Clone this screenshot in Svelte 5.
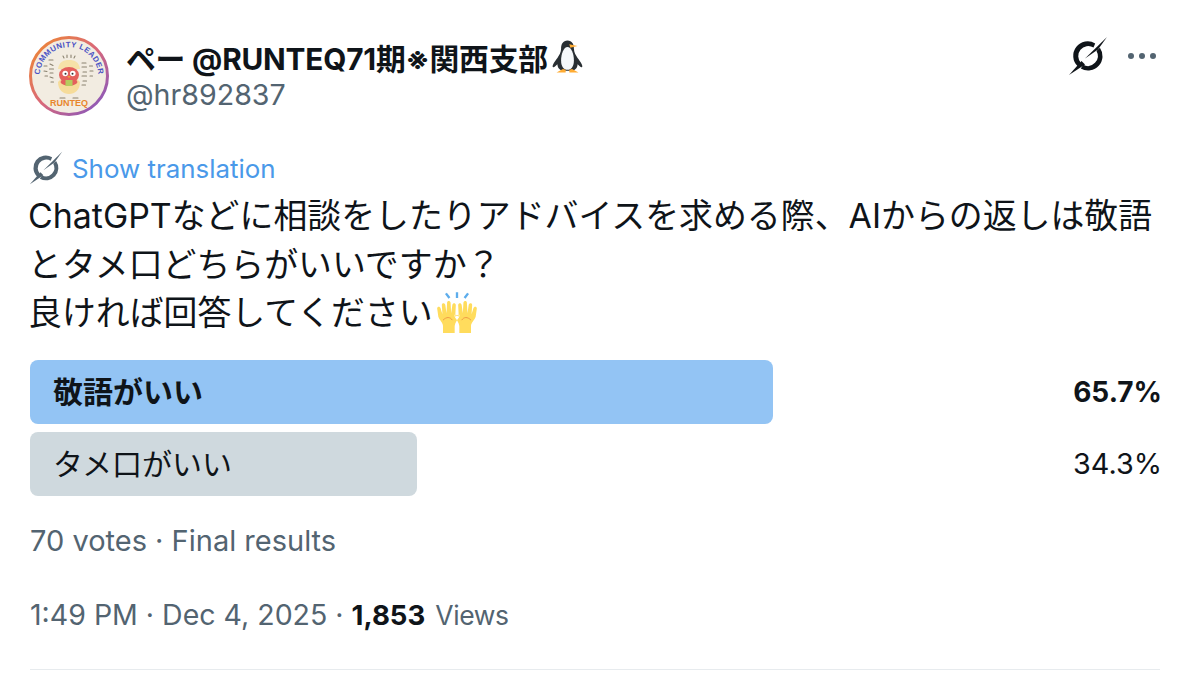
<script>
  const options = [
    { label: '敬語がいい', pct: 65.7, width: 743, winner: true },
    { label: 'タメ口がいい', pct: 34.3, width: 387, winner: false }
  ];
</script>

{#snippet grokIcon(cls)}
  <svg class={cls} viewBox="0 0 40 40" aria-hidden="true">
    <path d="M27.2 7.400A14.500 14.500 0 0 0 9.700 30.300L13 27A10 10 0 0 1 25.500 11.600Z" />
    <path d="M31.900 11.700A14.500 14.500 0 0 1 12.800 32.600L15.200 28.800A10 10 0 0 0 28.500 15Z" />
    <path d="M39 1L17 22.500L30 13.500Z" />
    <path d="M1 39L13.500 25L17 28.500Z" />
  </svg>
{/snippet}

<main class="tweet">
  <header class="head">
    <svg class="avatar" viewBox="0 0 80 80" aria-hidden="true">
      <defs>
        <linearGradient id="ringGrad" x1="0" y1="0" x2="1" y2="1">
          <stop offset="0" stop-color="#f08a2c" />
          <stop offset="0.5" stop-color="#d9687a" />
          <stop offset="1" stop-color="#7a55c8" />
        </linearGradient>
        <path id="arcTop" d="M11 46A29.500 29.500 0 1 1 69 46" />
      </defs>
      <circle cx="40" cy="40" r="38.500" fill="#f2ece1" stroke="url(#ringGrad)" stroke-width="3" />
      <text class="arc-top"><textPath href="#arcTop" startOffset="50%" text-anchor="middle">COMMUNITY LEADER</textPath></text>
      <text class="runteq" x="40" y="70" text-anchor="middle">RUNTEQ</text>
      <path d="M29 33c1-7 5-9 11-9s10 2 11 9z" fill="#f6e2a8" />
      <path d="M29 46c0 8 5 12 11 12s11-4 11-12l-3-3h-16z" fill="#f6dc9a" />
      <ellipse cx="40" cy="39" rx="10" ry="8" fill="#e4605c" />
      <path d="M31.500 46c2 5 15 5 17 0l-3-5H34.500z" fill="#e4605c" />
      <circle cx="36.200" cy="37.500" r="2.800" fill="#fff" />
      <circle cx="43.800" cy="37.500" r="2.800" fill="#fff" />
      <circle cx="36.500" cy="37.800" r="1" fill="#333" />
      <circle cx="43.500" cy="37.800" r="1" fill="#333" />
      <path d="M38.300 40h3.400l-1.700 2.200z" fill="#eea23c" />
      <path d="M36.500 44h7v6h-7z" fill="#b5cc5e" />
      <path class="hand" d="M20 24h4M21 28l3 1.500M20.500 33h4M21 37h3M21 41l3 1M22 46h2.500M15 30h3M15 35l3 .5M16 40h2.500M53 27h4M53 31h4.500M54 36h3.500M53 40h4.500M54 45h3.500M53 49h3.500M60.500 30h3M61 35h3M61 40h2.500" />
      <path class="hand" d="M34 20l1 2M38 19v2.500M42 19v2.500M46 20l-1 2M31 62h5M44 62h5" />
    </svg>
    <div class="who">
      <div class="name-row">
        <span class="name">ペー @RUNTEQ71期※関西支部</span>
        <svg class="penguin" viewBox="0 0 36 36" aria-hidden="true">
          <path d="M18 0c-5 0-7 4-7 9 0 4-2 7-4 10-3 4-6 8-5 10 1 1 3-1 5-3 0 4 3 7 6 7h10c3 0 6-3 6-7 2 2 4 4 5 3 1-2-2-6-5-10-2-3-4-6-4-10 0-5-2-9-7-9z" fill="#292f33" />
          <path d="M18 7c-4 0-7 7-7 15 0 6 3 10 7 10s7-4 7-10c0-8-3-15-7-15z" fill="#f5f8fa" />
          <path d="M20 4l9 2-8 2z" fill="#ffac33" />
          <path d="M6 35l7-4 3 1v3zM30 35l-7-4-3 1v3z" fill="#ffac33" />
        </svg>
      </div>
      <div class="handle">@hr892837</div>
    </div>
    <div class="actions">
      {@render grokIcon('grok')}
      <svg class="more" viewBox="0 0 30 8" aria-hidden="true">
        <circle cx="4" cy="4" r="3" /><circle cx="15" cy="4" r="3" /><circle cx="26" cy="4" r="3" />
      </svg>
    </div>
  </header>

  <div class="translate">
    {@render grokIcon('grok small')}
    <span>Show translation</span>
  </div>

  <p class="body">ChatGPTなどに相談をしたりアドバイスを求める際、AIからの返しは敬語<br />とタメ口どちらがいいですか？<br />良ければ回答してください<svg class="hands" viewBox="0 0 36 36" aria-hidden="true">
      <path d="M6 36v-6c0-3-3-5-4-8L1 15c0-2 2.500-2 3 0l1.500 5L5 12c0-2 2.600-2 3 0l1 7 .5-9c0-2 2.700-2 3 0l.5 9 1-7c.3-2 2.800-2 3 0l-.5 10c2-1 2.500-2 3-2 1 .5.500 2 0 3-1.500 2-3 4-3.500 7v7zM30 36v-6c0-3 3-5 4-8l1-7c0-2-2.500-2-3 0l-1.500 5 .5-8c0-2-2.600-2-3 0l-1 7-.5-9c0-2-2.700-2-3 0l-.5 9-1-7c-.3-2-2.800-2-3 0l.5 10c-2-1-2.500-2-3-2-1 .5-.5 2 0 3 1.500 2 3 4 3.500 7v7z" fill="#ffdc5d" />
      <path class="crease" d="M6 25c3-3 6-3 8 0M30 25c-3-3-6-3-8 0" />
      <path class="rays" d="M18 1v5M8.500 2l3 4M27.500 2l-3 4" />
    </svg></p>

  <section class="poll">
    {#each options as o}
      <div class="option">
        <div class="bar" class:winner={o.winner} style="width: {o.width}px">{o.label}</div>
        <span class="pct" class:winner={o.winner}>{o.pct}%</span>
      </div>
    {/each}
  </section>

  <div class="meta votes">70 votes · Final results</div>
  <div class="meta time">1:49 PM · Dec 4, 2025 · <strong>1,853</strong> <span class="views">Views</span></div>
  <hr class="rule" />
</main>

<style>
  :global(body) {
    margin: 0;
    background: #fff;
  }
  .tweet {
    width: 1186px;
    height: 674px;
    overflow: hidden;
    box-sizing: border-box;
    padding: 36px 26px 0 30px;
    font-family: Inter, "Noto Sans CJK JP", sans-serif;
    color: #0f1419;
  }
  .head {
    display: flex;
    align-items: flex-start;
  }
  .avatar {
    width: 80px;
    height: 80px;
    flex: none;
    margin-left: -1px;
  }
  .arc-top {
    font: 700 7.800px "Liberation Sans", sans-serif;
    fill: #4a52c4;
    letter-spacing: 0.4px;
  }
  .runteq {
    font: 700 9px "Liberation Sans", sans-serif;
    fill: #e8862d;
  }
  .hand {
    stroke: #8a8270;
    stroke-width: 1.100;
    stroke-linecap: round;
    fill: none;
  }
  .who {
    margin-left: 17px;
    flex: 1;
  }
  .name-row {
    display: flex;
    align-items: center;
    height: 42px;
  }
  .name {
    font-size: 29.800px;
    font-weight: 700;
    letter-spacing: -0.2px;
  }
  .penguin {
    flex: none;
    width: 33px;
    height: 36px;
    margin-left: 3px;
  }
  .handle {
    font-size: 28.600px;
    line-height: 34px;
    color: #536471;
  }
  .actions {
    display: flex;
    align-items: center;
    gap: 19px;
    height: 40px;
    margin-right: 3px;
  }
  .grok {
    width: 40px;
    height: 40px;
    fill: #0f1419;
  }
  .more {
    width: 30px;
    height: 8px;
    fill: #536471;
  }
  .translate {
    display: flex;
    align-items: center;
    gap: 9px;
    margin-top: 32px;
    margin-left: -1px;
    font-size: 25.900px;
    color: #4a99e9;
    height: 40px;
  }
  :global(.tweet .grok.small) {
    width: 34px;
    height: 34px;
    fill: #536471;
  }
  .body {
    margin: 4px 0 0 -2px;
    font-size: 33.900px;
    line-height: 48.500px;
  }
  .hands {
    width: 42px;
    height: 42px;
    margin-left: 3px;
    vertical-align: -8px;
  }
  .crease {
    stroke: #ef9645;
    stroke-width: 0.800;
    fill: none;
  }
  .rays {
    stroke: #5dadec;
    stroke-width: 2;
    fill: none;
  }
  .poll {
    display: flex;
    flex-direction: column;
    gap: 8px;
    margin-top: 22px;
  }
  .option {
    display: flex;
    align-items: center;
    justify-content: space-between;
  }
  .bar {
    height: 64px;
    box-sizing: border-box;
    padding: 0 0 4px 23px;
    display: flex;
    align-items: center;
    border-radius: 8px;
    background: #cfd9de;
    font-size: 30px;
    white-space: nowrap;
  }
  .bar.winner {
    background: #93c4f4;
    font-weight: 700;
  }
  .pct {
    font-size: 28.800px;
    margin-right: -2px;
  }
  .pct.winner {
    font-size: 28px;
    font-weight: 700;
  }
  .meta {
    color: #536471;
    font-size: 29px;
  }
  .votes {
    margin-top: 28px;
    line-height: 34px;
  }
  .time {
    margin-top: 40px;
    line-height: 34px;
    font-size: 28.500px;
  }
  .time strong {
    color: #0f1419;
    font-size: 27.600px;
  }
  .views {
    font-size: 26.500px;
    letter-spacing: -0.4px;
    margin-left: 2px;
  }
  .rule {
    border: 0;
    border-top: 1px solid #e7ebee;
    margin: 37px 0 0;
  }
</style>
